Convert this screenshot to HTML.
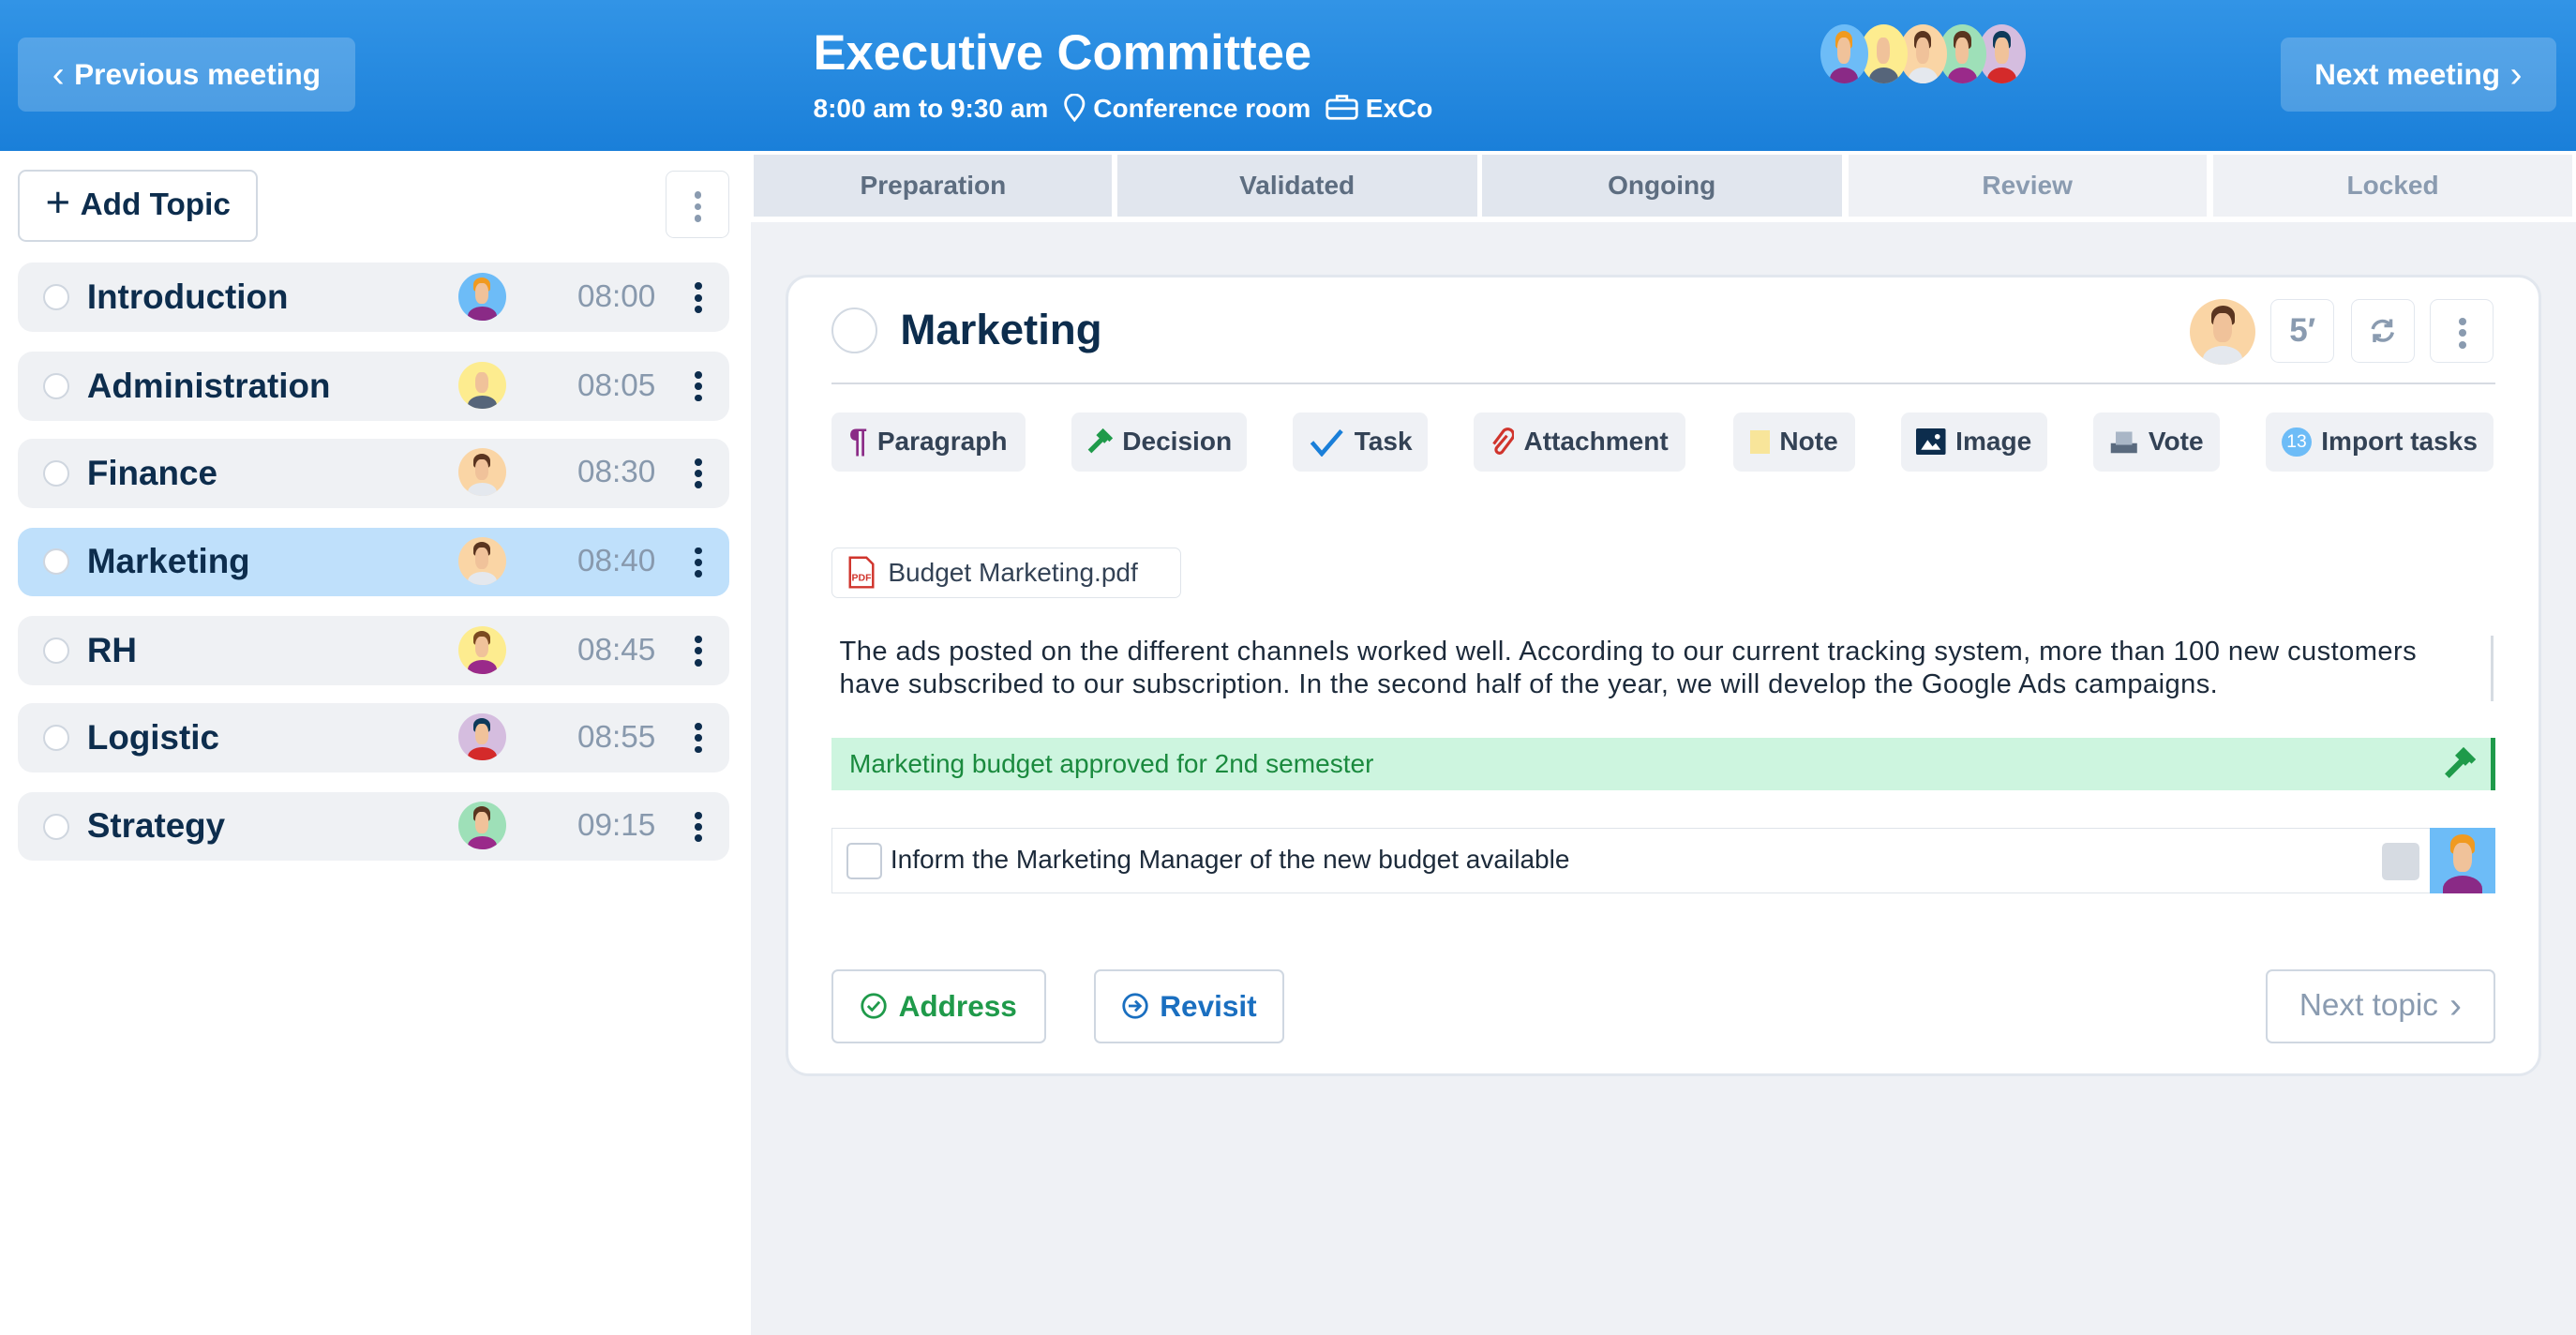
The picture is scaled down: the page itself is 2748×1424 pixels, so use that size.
<!DOCTYPE html>
<html><head><meta charset="utf-8">
<style>
*{box-sizing:border-box;margin:0;padding:0}
html,body{width:2748px;height:1424px;overflow:hidden;background:#fff}
#r{zoom:1.752551;width:1568px;height:813px;position:relative;font-family:"Liberation Sans",sans-serif;background:#eff1f5}
.a{position:absolute}
.hdr{left:0;top:0;width:1568px;height:92px;background:linear-gradient(180deg,#3294e6,#1a7fd9)}
.hb{height:45px;top:23px;background:rgba(255,255,255,.2);border-radius:5px;color:#fff;font-weight:bold;font-size:18px;display:flex;align-items:center;justify-content:center;gap:6px}
.side{left:0;top:92px;width:457px;height:721px;background:#fff}
.row{left:11px;width:433px;height:42px;border-radius:9px;background:#eff1f4}
.row .rd{position:absolute;left:15px;top:13px;width:16px;height:16px;border-radius:50%;border:1.5px solid #cfd6df;background:#fff}
.row .t{position:absolute;left:42px;top:9px;font-size:21px;font-weight:bold;color:#0d2d4d}
.row .tm{position:absolute;right:45px;top:10px;font-size:19px;color:#8899ad}
.av{position:absolute;border-radius:50%;overflow:hidden}
.row .av{left:268px;top:6px;width:29px;height:29px}
.av .h{position:absolute;left:32%;top:10%;width:36%;height:30%;border-radius:50% 50% 20% 20%}
.av .f{position:absolute;left:36%;top:22%;width:28%;height:44%;border-radius:40%;background:#f0c29a}
.av .b{position:absolute;left:20%;top:72%;width:60%;height:40%;border-radius:50% 50% 0 0}
.kb{position:absolute;width:4px}
.kb i{display:block;width:4.5px;height:4.5px;border-radius:50%;background:#0d2d4d;margin-bottom:2.5px}
.tab{top:94px;height:38px;font-size:16px;font-weight:bold;color:#5d6d80;display:flex;align-items:center;justify-content:center}
.card{left:478px;top:167px;width:1069px;height:488px;background:#fff;border:2px solid #e2e7ee;border-radius:14px}
.tb{top:251px;height:36px;background:#eff1f5;border-radius:5px;font-size:16px;font-weight:bold;color:#334255;display:flex;align-items:center;justify-content:center;gap:6px}
.sq{top:182px;width:39px;height:39px;border:1px solid #e2e7ee;border-radius:5px;display:flex;align-items:center;justify-content:center;color:#8a9bb0}
.bt{top:590px;height:45px;border:1.5px solid #cfd7e1;border-radius:4px;font-size:18px;font-weight:bold;display:flex;align-items:center;justify-content:center;gap:7px;background:#fff}
</style></head><body><div id="r">
<div class="a hdr"></div>
<div class="a hb" style="left:11px;width:205px"><span style="font-size:22px;font-weight:normal">‹</span>Previous meeting</div>
<div class="a hb" style="left:1388px;width:168px">Next meeting<span style="font-size:22px;font-weight:normal">›</span></div>
<div class="a" style="left:495px;top:15px;color:#fff;font-size:30px;font-weight:bold">Executive Committee</div>
<div class="a" style="left:495px;top:57px;color:#fff;font-size:16px;font-weight:bold;white-space:nowrap">8:00 am to 9:30 am &nbsp;<svg width="14" height="17" viewBox="0 0 14 17" style="vertical-align:-3px"><path d="M7 16C3 11 1.5 8.5 1.5 6a5.5 5.5 0 0 1 11 0c0 2.5-1.5 5-5.5 10z" fill="none" stroke="#fff" stroke-width="1.6"/></svg> Conference room &nbsp;<svg width="20" height="16" viewBox="0 0 20 16" style="vertical-align:-2px"><rect x="1" y="4" width="18" height="11" rx="2" fill="none" stroke="#fff" stroke-width="1.6"/><path d="M7 4V1.5h6V4M1 9h18" fill="none" stroke="#fff" stroke-width="1.6"/></svg> ExCo</div>
<div class="a" style="left:1108px;top:15px;width:125px;height:36px">
<div class="av" style="left:96px;top:0;width:29px;height:36px;background:#d5bddf"><div class="h" style="background:#0d3a5a"></div><div class="f"></div><div class="b" style="background:#d42a2a"></div></div>
<div class="av" style="left:72px;top:0;width:29px;height:36px;background:#9ee0b8"><div class="h" style="background:#5a3520"></div><div class="f"></div><div class="b" style="background:#9a2a8a"></div></div>
<div class="av" style="left:48px;top:0;width:29px;height:36px;background:#fad5a5"><div class="h" style="background:#5a3520"></div><div class="f"></div><div class="b" style="background:#e4e8ee"></div></div>
<div class="av" style="left:24px;top:0;width:29px;height:36px;background:#fdec8f"><div class="f"></div><div class="b" style="background:#56657a"></div></div>
<div class="av" style="left:0;top:0;width:29px;height:36px;background:#6dbcf7"><div class="h" style="background:#f09a20"></div><div class="f"></div><div class="b" style="background:#8a2a86"></div></div>
</div>
<div class="a side"></div>
<div class="a" style="left:11px;top:103px;width:146px;height:44px;border:1.5px solid #d2d9e2;border-radius:5px;display:flex;align-items:center;justify-content:center;font-size:19px;font-weight:bold;color:#0d2d4d;gap:6px"><span style="font-size:26px;font-weight:normal;margin-top:-3px">+</span>Add Topic</div>
<div class="a" style="left:405px;top:104px;width:39px;height:41px;border:1px solid #dfe4ea;border-radius:5px"><div class="kb" style="left:17px;top:12px"><i style="background:#8a9bb0"></i><i style="background:#8a9bb0"></i><i style="background:#8a9bb0"></i></div></div>

<div class="a row" style="top:160px"><div class="rd"></div><div class="t">Introduction</div><div class="av" style="background:#6dbcf7"><div class="h" style="background:#f09a20"></div><div class="f"></div><div class="b" style="background:#8a2a86"></div></div><div class="tm">08:00</div><div class="kb" style="left:412px;top:12px"><i></i><i></i><i></i></div></div>
<div class="a row" style="top:214px"><div class="rd"></div><div class="t">Administration</div><div class="av" style="background:#fdec8f"><div class="f"></div><div class="b" style="background:#56657a"></div></div><div class="tm">08:05</div><div class="kb" style="left:412px;top:12px"><i></i><i></i><i></i></div></div>
<div class="a row" style="top:267px"><div class="rd"></div><div class="t">Finance</div><div class="av" style="background:#fad5a5"><div class="h" style="background:#5a3520"></div><div class="f"></div><div class="b" style="background:#e4e8ee"></div></div><div class="tm">08:30</div><div class="kb" style="left:412px;top:12px"><i></i><i></i><i></i></div></div>
<div class="a row" style="top:321px;background:#bfe0fb"><div class="rd"></div><div class="t">Marketing</div><div class="av" style="background:#fad5a5"><div class="h" style="background:#5a3520"></div><div class="f"></div><div class="b" style="background:#e4e8ee"></div></div><div class="tm">08:40</div><div class="kb" style="left:412px;top:12px"><i></i><i></i><i></i></div></div>
<div class="a row" style="top:375px"><div class="rd"></div><div class="t">RH</div><div class="av" style="background:#fdec8f"><div class="h" style="background:#7a4a20"></div><div class="f"></div><div class="b" style="background:#9a2a8a"></div></div><div class="tm">08:45</div><div class="kb" style="left:412px;top:12px"><i></i><i></i><i></i></div></div>
<div class="a row" style="top:428px"><div class="rd"></div><div class="t">Logistic</div><div class="av" style="background:#d5bddf"><div class="h" style="background:#0d3a5a"></div><div class="f"></div><div class="b" style="background:#d42a2a"></div></div><div class="tm">08:55</div><div class="kb" style="left:412px;top:12px"><i></i><i></i><i></i></div></div>
<div class="a row" style="top:482px"><div class="rd"></div><div class="t">Strategy</div><div class="av" style="background:#9ee0b8"><div class="h" style="background:#5a3520"></div><div class="f"></div><div class="b" style="background:#9a2a8a"></div></div><div class="tm">09:15</div><div class="kb" style="left:412px;top:12px"><i></i><i></i><i></i></div></div>

<div class="a" style="left:457px;top:92px;width:1111px;height:43px;background:#fff"></div>
<div class="a tab" style="left:459px;width:218px;background:#e1e6ee">Preparation</div>
<div class="a tab" style="left:680px;width:219px;background:#e1e6ee">Validated</div>
<div class="a tab" style="left:902px;width:219px;background:#e1e6ee">Ongoing</div>
<div class="a tab" style="left:1125px;width:218px;background:#eff1f5;color:#8a9bb0">Review</div>
<div class="a tab" style="left:1347px;width:219px;background:#eff1f5;color:#8a9bb0">Locked</div>

<div class="a card"></div>
<div class="a" style="left:506px;top:187px;width:28px;height:28px;border-radius:50%;border:1.5px solid #d2d9e2"></div>
<div class="a" style="left:548px;top:186px;font-size:26px;font-weight:bold;color:#0d2d4d">Marketing</div>
<div class="av" style="left:1333px;top:182px;width:40px;height:40px;background:#fad5a5"><div class="h" style="background:#5a3520"></div><div class="f"></div><div class="b" style="background:#e4e8ee"></div></div>
<div class="a sq" style="left:1382px;font-size:20px;font-weight:bold">5′</div>
<div class="a sq" style="left:1431px"><svg width="18" height="18" viewBox="0 0 18 18" fill="none" stroke="#8a9bb0" stroke-width="2"><path d="M3 8a6 6 0 0 1 11-2M15 10a6 6 0 0 1-11 2"/><path d="M14 2v4h-4M4 16v-4h4"/></svg></div>
<div class="a sq" style="left:1479px"><div class="kb" style="left:17px;top:11px"><i style="background:#8a9bb0"></i><i style="background:#8a9bb0"></i><i style="background:#8a9bb0"></i></div></div>
<div class="a" style="left:506px;top:233px;width:1013px;height:1px;background:#d6dbe2"></div>

<div class="a tb" style="left:506px;width:118px"><span style="color:#8a2a86;font-size:20px">¶</span>Paragraph</div>
<div class="a tb" style="left:652px;width:107px"><svg width="16" height="16" viewBox="0 0 16 16"><path d="M2 14l7-7M7 3l5 5M9 1l6 6" stroke="#1f9a4a" stroke-width="3" fill="none"/></svg>Decision</div>
<div class="a tb" style="left:787px;width:82px"><svg width="22" height="18" viewBox="0 0 22 18"><path d="M2 9l6 7L20 2" stroke="#1a7fd9" stroke-width="2.6" fill="none"/></svg>Task</div>
<div class="a tb" style="left:897px;width:129px"><svg width="14" height="18" viewBox="0 0 14 18"><path d="M10 5l-6 7a2 2 0 0 0 3 3l6-8a3.5 3.5 0 0 0-5-5L2 10" stroke="#d0342c" stroke-width="1.8" fill="none"/></svg>Attachment</div>
<div class="a tb" style="left:1055px;width:74px"><span style="display:inline-block;width:12px;height:14px;background:#f8e59a"></span>Note</div>
<div class="a tb" style="left:1157px;width:89px"><svg width="18" height="16" viewBox="0 0 18 16"><rect width="18" height="16" rx="1" fill="#0d2d4d"/><path d="M3 13l4-6 3 4 2-2 3 4z" fill="#fff"/><circle cx="13" cy="5" r="1.6" fill="#fff"/></svg>Image</div>
<div class="a tb" style="left:1274px;width:77px"><svg width="18" height="16" viewBox="0 0 18 16"><rect x="1" y="9" width="16" height="6" fill="#5a6a7e"/><rect x="4" y="2" width="10" height="8" fill="#a9b6c6"/></svg>Vote</div>
<div class="a tb" style="left:1379px;width:139px"><span style="display:inline-block;width:18px;height:18px;border-radius:50%;background:#6dbcf7;color:#fff;font-size:11px;line-height:18px;text-align:center;font-weight:normal">13</span>Import tasks</div>

<div class="a" style="left:506px;top:333px;width:213px;height:31px;border:1px solid #dfe4ea;border-radius:4px;font-size:16px;color:#334255;display:flex;align-items:center;padding-left:10px;gap:8px"><svg width="16" height="20" viewBox="0 0 16 20"><path d="M1 1h10l4 4v14H1z" fill="#fff" stroke="#d0342c" stroke-width="1.4"/><text x="2" y="15" font-size="6" font-weight="bold" fill="#d0342c" font-family="Liberation Sans">PDF</text></svg>Budget Marketing.pdf</div>
<div class="a" style="left:511px;top:387px;width:992px;font-size:16.6px;letter-spacing:0.25px;line-height:20px;color:#1c2a3a">The ads posted on the different channels worked well. According to our current tracking system, more than 100 new customers have subscribed to our subscription. In the second half of the year, we will develop the Google Ads campaigns.</div>
<div class="a" style="left:1516px;top:387px;width:2px;height:40px;background:#d6dbe2"></div>
<div class="a" style="left:506px;top:449px;width:1013px;height:32px;background:#cdf5df;border-right:3px solid #1f9a4a;font-size:16px;color:#1a8a3e;padding:7px 0 0 11px">Marketing budget approved for 2nd semester</div>
<svg class="a" style="left:1487px;top:455px" width="20" height="20" viewBox="0 0 16 16"><path d="M2 14l7-7M7 3l5 5M9 1l6 6" stroke="#1f9a4a" stroke-width="3" fill="none"/></svg>
<div class="a" style="left:506px;top:504px;width:1013px;height:40px;border:1px solid #dfe4ea"></div>
<div class="a" style="left:515px;top:513px;width:22px;height:22px;border:1.5px solid #c5cdd8;border-radius:3px"></div>
<div class="a" style="left:542px;top:514px;font-size:16px;color:#1c2a3a">Inform the Marketing Manager of the new budget available</div>
<div class="a" style="left:1450px;top:513px;width:23px;height:23px;background:#d6dbe2;border-radius:3px"></div>
<div class="av" style="left:1479px;top:504px;width:40px;height:40px;background:#6dbcf7;border-radius:0"><div class="h" style="background:#f09a20"></div><div class="f"></div><div class="b" style="background:#8a2a86"></div></div>

<div class="a bt" style="left:506px;width:131px;color:#1f9a4a"><svg width="16" height="16" viewBox="0 0 16 16" fill="none" stroke="#1f9a4a" stroke-width="1.6"><circle cx="8" cy="8" r="7"/><path d="M4.5 8l2.5 2.5 4.5-5"/></svg>Address</div>
<div class="a bt" style="left:666px;width:116px;color:#1a6fc0"><svg width="16" height="16" viewBox="0 0 16 16" fill="none" stroke="#1a6fc0" stroke-width="1.6"><circle cx="8" cy="8" r="7"/><path d="M4 8h7M8 5l3 3-3 3"/></svg>Revisit</div>
<div class="a bt" style="left:1379px;width:140px;color:#8a9bb0;font-weight:normal;font-size:19px">Next topic <span style="font-size:22px">›</span></div>
</div></body></html>
